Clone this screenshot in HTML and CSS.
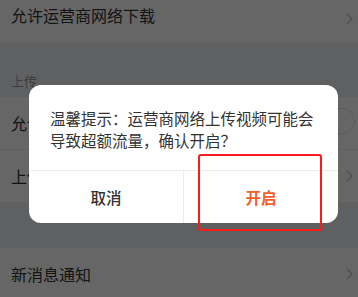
FILE: index.html
```html
<!DOCTYPE html>
<html lang="zh-CN">
<head>
    <meta charset="UTF-8">
    <meta name="viewport" content="width=device-width, initial-scale=1.0">
    <title>设置</title>
    <link rel="stylesheet" href="styles.css">
</head>
<body>
    <div class="page">
        <div class="row row-top">
            <span class="row-label">允许运营商网络下载</span>
            <svg class="chevron" width="7" height="12" viewBox="0 0 7 12"><polyline points="1,1 6,6 1,11" /></svg>
        </div>
        <div class="section-title">上传</div>
        <div class="row row-line">
            <span class="row-label">允许运营商网络上传</span>
            <span class="switch"><span class="knob"></span></span>
        </div>
        <div class="row">
            <span class="row-label">上传清晰度</span>
            <svg class="chevron" width="7" height="12" viewBox="0 0 7 12"><polyline points="1,1 6,6 1,11" /></svg>
        </div>
        <div class="gap"></div>
        <div class="row">
            <span class="row-label">新消息通知</span>
            <svg class="chevron" width="7" height="12" viewBox="0 0 7 12"><polyline points="1,1 6,6 1,11" /></svg>
        </div>
    </div>

    <!-- dim layer behind the dialog -->
    <div class="mask"></div>

    <div class="dialog">
        <div class="dialog-text">温馨提示：运营商网络上传视频可能会导致超额流量，确认开启？</div>
        <div class="dialog-actions">
            <div class="dialog-btn btn-cancel">取消</div>
            <div class="dialog-btn btn-ok">开启</div>
        </div>
    </div>

    <!-- annotation box -->
    <div class="highlight"></div>
</body>
</html>
```

FILE: styles.css
```css
body {
    margin: 0;
    width: 358px;
    height: 297px;
    overflow: hidden;
    position: relative;
    font-family: "Noto Sans CJK SC", "Noto Sans", sans-serif;
    background: #eef1f5;
}
.page {
    display: flex;
    flex-direction: column;
}
.row {
    height: 52px;
    flex-shrink: 0;
    display: flex;
    align-items: center;
    justify-content: space-between;
    padding: 0 3px 0 11px;
    background: #fff;
    color: #333;
    font-size: 16px;
}
.row-top {
    height: 43px;
    align-items: flex-start;
    padding-top: 4px;
    box-sizing: border-box;
}
.row-top .row-label,
.row-top .chevron {
    line-height: 22px;
}
.row-top .chevron {
    margin-top: 9px;
}
.row-line {
    height: 52px;
    border-bottom: 1px solid #eee;
}
.row-label {
    line-height: 22px;
}
.chevron {
    margin-right: 2px;
}
.chevron polyline {
    fill: none;
    stroke: #c4c4c4;
    stroke-width: 1.3;
}
.section-title {
    height: 54px;
    box-sizing: border-box;
    padding: 30px 0 0 11px;
    font-size: 13px;
    line-height: 16px;
    color: #999;
}
.gap {
    height: 46px;
    flex-shrink: 0;
}
.switch {
    width: 46px;
    height: 26px;
    box-sizing: border-box;
    border: 1px solid #e3e3e3;
    border-radius: 13px;
    background: #fff;
    position: relative;
    margin-top: -4px;
}
.knob {
    position: absolute;
    left: 1px;
    top: 1px;
    width: 22px;
    height: 22px;
    border-radius: 50%;
    background: #fff;
    box-shadow: 0 1px 3px rgba(0, 0, 0, 0.25);
}
.mask {
    position: absolute;
    inset: 0;
    background: rgba(0, 0, 0, 0.6);
}
.dialog {
    position: absolute;
    left: 29px;
    top: 85px;
    width: 309px;
    background: #fff;
    border-radius: 12px;
    overflow: hidden;
}
.dialog-text {
    padding: 22px 21px 19px 21px;
    font-size: 15.5px;
    line-height: 22px;
    color: #333;
}
.dialog-actions {
    display: flex;
    border-top: 1px solid #ececec;
}
.dialog-btn {
    flex: 1;
    height: 52px;
    display: flex;
    align-items: center;
    justify-content: center;
    font-size: 15.5px;
}
.btn-cancel {
    color: #333;
    font-weight: 500;
    border-right: 1px solid #ececec;
}
.btn-ok {
    color: #f2602b;
    font-weight: 700;
}
.highlight {
    position: absolute;
    left: 198px;
    top: 154px;
    width: 124px;
    height: 77px;
    box-sizing: border-box;
    border: 2.5px solid #ff1a1a;
    border-radius: 3px;
}
```
